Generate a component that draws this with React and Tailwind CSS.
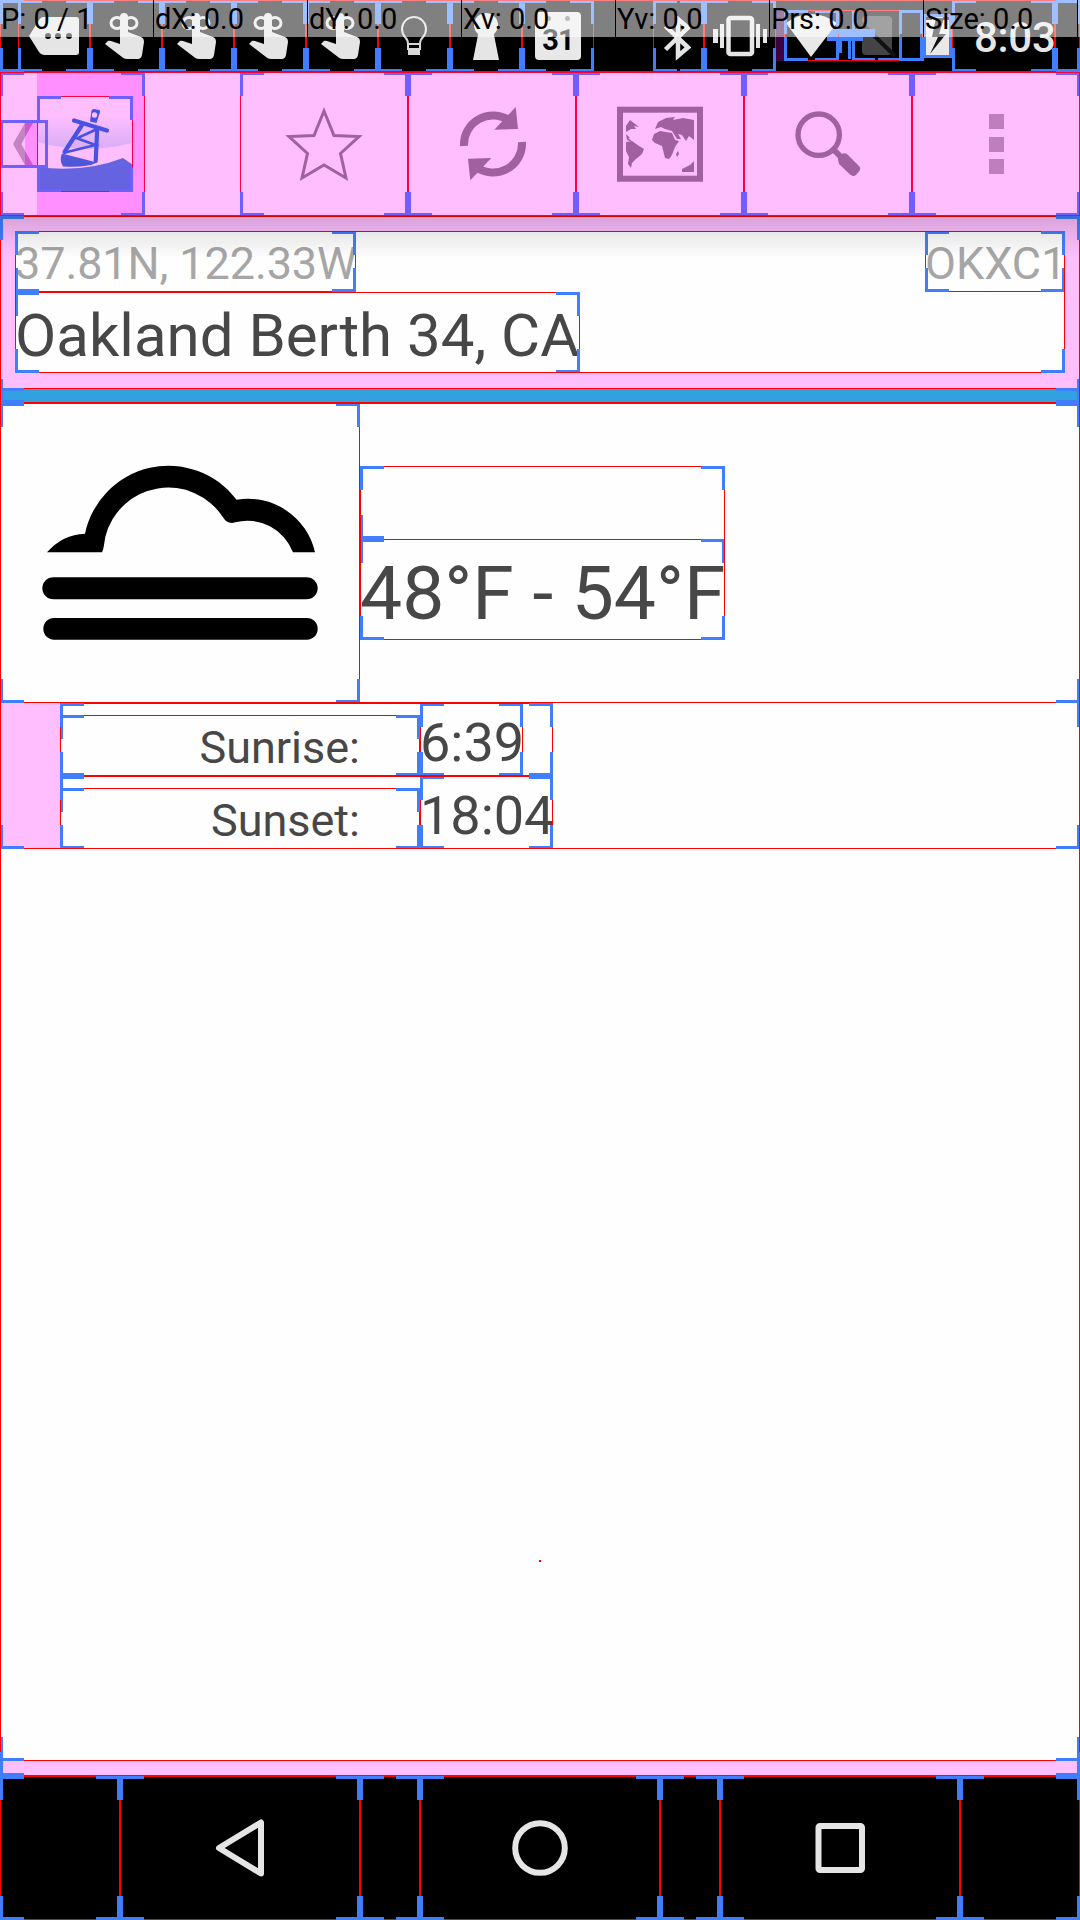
import React from "react";

/* Debug outline: one-pixel red frame with blue corner marks. */
function Outline({ frame = true, sides = "both" }) {
  return (
    <span className="pointer-events-none absolute inset-0">
      {frame && <span className="absolute inset-0 border border-[#ff0000]" />}
      <span className="absolute left-0 top-0 size-6 border-l-3 border-t-3 border-[#3f7fff]" />
      <span className="absolute bottom-0 left-0 size-6 border-b-3 border-l-3 border-[#3f7fff]" />
      {sides === "both" && (
        <>
          <span className="absolute right-0 top-0 size-6 border-r-3 border-t-3 border-[#3f7fff]" />
          <span className="absolute bottom-0 right-0 size-6 border-b-3 border-r-3 border-[#3f7fff]" />
        </>
      )}
    </span>
  );
}

function Box({ className = "", children, sides, frame }) {
  return (
    <div className={"relative shrink-0 " + className}>
      {children}
      <Outline sides={sides} frame={frame} />
    </div>
  );
}

function Hand() {
  return (
    <svg viewBox="0 0 72 72" className="size-[72px]" fill="#e5e5e5">
      <ellipse cx="27" cy="23" rx="6" ry="5.5" fill="none" stroke="#e5e5e5" strokeWidth="3" />
      <ellipse cx="41" cy="23" rx="6" ry="5.5" fill="none" stroke="#e5e5e5" strokeWidth="3" />
      <path d="M30 17q0-4 4-4t4 4V32l13 5q3 1 3 5l-2 13q-1 4-4 4H37q-3 0-5-2L15 44l2-2q1-2 4-1l9 3z" />
    </svg>
  );
}

function StatusBar() {
  const readings = ["P: 0 / 1", "dX: 0.0", "dY: 0.0", "Xv: 0.0", "Yv: 0.0", "Prs: 0.0", "Size: 0.0"];
  return (
    <div className="relative h-[72px] bg-black">
      <div className="flex h-[72px]">
        <div className="w-[18px]" />
        <Box className="w-[72px]">
          <svg viewBox="0 0 72 72" className="size-[72px]">
            <path d="M25 17H58q3 0 3 3V52q0 3-3 3H26q-3 0-5-3L11 36L21 20q2-3 4-3z" fill="#e5e5e5" />
            <circle cx="30" cy="36" r="3" /><circle cx="40" cy="36" r="3" /><circle cx="51" cy="36" r="3" />
          </svg>
        </Box>
        <Box className="w-[72px]"><Hand /></Box>
        <Box className="w-[72px]"><Hand /></Box>
        <Box className="w-[72px]"><Hand /></Box>
        <Box className="w-[72px]"><Hand /></Box>
        <Box className="w-[72px]">
          <svg viewBox="0 0 72 72" className="size-[72px]" fill="none" stroke="#d8d8d8" strokeWidth="2">
            <path d="M30 44q0-4-3-7a12 12 0 1 1 18 0q-3 3-3 7z" />
            <path d="M30 44v5h12v-5" /><path d="M31 50h10v4h-10z" fill="#d8d8d8" />
          </svg>
        </Box>
        <Box className="w-[72px]">
          <svg viewBox="0 0 72 72" className="size-[72px]" fill="#e5e5e5">
            <circle cx="36" cy="25" r="12" />
            <path d="M29 30h14l6 30H23z" />
          </svg>
        </Box>
        <Box className="w-[72px]">
          <div className="flex h-[72px] justify-center pt-[12px]">
            <div className="relative h-[48px] w-[46px] rounded-[4px] bg-[#e8e8e8] pt-[13px] text-center text-[29px] font-bold leading-[30px] tracking-[-1px] text-black">
              31
              <span className="absolute left-[11px] top-[4px] size-[5px] rounded-full bg-[#777]" />
              <span className="absolute right-[11px] top-[4px] size-[5px] rounded-full bg-[#777]" />
            </div>
          </div>
        </Box>
        <div className="w-[59px]" />
        <Box className="w-[51px]">
          <svg viewBox="0 0 51 72" className="h-[72px] w-[51px]" fill="none" stroke="#e5e5e5" strokeWidth="4.500">
            <path d="M12.500 26L35 47.500L25 56V19L35 27.500L12.500 49.500" />
          </svg>
        </Box>
        <Box className="w-[72px]">
          <svg viewBox="704 0 72 72" className="size-[72px]" fill="#e5e5e5">
            <rect x="728.500" y="18" width="23.500" height="36" rx="2" fill="none" stroke="#e5e5e5" strokeWidth="4.500" />
            <path d="M713 29h5v14h-5zM720 24h4v24h-4zM756 24h4v24h-4zM763 29h4v14h-4z" />
          </svg>
        </Box>
        <div className="w-[8px] pt-[10px]"><div className="h-[51px] bg-[#400040]" /></div>
        <div className="h-[61px] w-[139px] pt-[10px]">
          <Box className="flex h-[51px]">
            <Box className="w-[55px]">
              <svg viewBox="784 10 55 51" className="h-[51px] w-[55px]">
                <path d="M786 23Q811 5 837 23L811 57z" fill="#e8e8e8" />
              </svg>
            </Box>
            <svg viewBox="839 10 60 51" className="h-[51px] w-[60px] overflow-visible">
              <rect x="862" y="16" width="30" height="39" rx="4" fill="#444" />
              <path d="M858 20L895 56" stroke="#111" strokeWidth="4" />
              <path d="M827 29h48v8h-12v4h-36zM839 41h3v12h-3zM848 41h3v18h-3z" fill="#3f7fff" />
              <path d="M852 10v51h23v-3h-20V10zM878 58h21v3h-21z" fill="#3f7fff" />
            </svg>
            <Box className="w-[25px]"><div /></Box>
          </Box>
        </div>
        <div className="h-[58px] w-[29px] pt-[14px]">
          <Box className="h-[44px]">
            <svg viewBox="923 14 29 44" className="h-[44px] w-[29px]">
              <path d="M926 20h6v-4h11v4h6v35h-23z" fill="#e8e8e8" />
              <path d="M936 18L932 37h6l-8 17l16-20h-7l5-16z" fill="#111" />
            </svg>
          </Box>
        </div>
        <Box className="w-[103px] pl-[22px] pt-[14px] text-[42px] font-medium leading-[48px] tracking-[-0.3px] text-[#e5e5e5]">8:03</Box>
        <Box className="w-[25px]"><div /></Box>
      </div>
      <Outline />
      <div className="absolute left-0 top-0 flex h-[37px] w-full">
        {readings.map((r) => (
          <div key={r} className="h-[37px] w-[154px] shrink-0 border-r border-black">
            <div className="h-full whitespace-pre bg-white/50 pl-[1px] pt-[1px] text-[29px] leading-[36px] text-black">{r}</div>
          </div>
        ))}
        <div className="h-[37px] w-[2px] bg-white/50" />
      </div>
    </div>
  );
}

function ActionBar() {
  return (
    <div className="relative flex h-[144px] bg-white">
      <Box className="flex w-[145px]">
        <div className="w-[37px]" />
        <div className="w-[108px] bg-[#ffbfff] pt-[24px]">
          <Box className="size-[96px] bg-white">
            <svg viewBox="37 96 96 96" className="size-[96px]">
              <defs>
                <linearGradient id="sky" x1="0" y1="0" x2="0" y2="1">
                  <stop offset="0.350" stopColor="#ffffff" />
                  <stop offset="1" stopColor="#cbe6f4" />
                </linearGradient>
              </defs>
              <path d="M37 96H133V143Q85 155 37 142z" fill="url(#sky)" />
              <path d="M37 167Q85 173 123 158L133 165V192H37z" fill="#3184d4" />
              <path d="M62 153.500L97 162.500Q86 168 63 166.500Q59 160 62 153.500z" fill="#1675cc" />
              <g fill="none" stroke="#0d6bd8" strokeWidth="4.200" strokeLinecap="round">
                <path d="M74 120.500L107 130.500" />
                <path d="M82 125L64.500 152M97.200 129L95.700 161" />
                <path d="M95 130L77 138.300L95.500 145L65 152.500" strokeWidth="2.500" />
              </g>
              <path d="M91.500 110.500Q92 109 94 109L99 110Q100.500 110.500 100 112L96.500 123L90 121.500z" fill="#0d6bd8" />
              <circle cx="94.500" cy="115" r="2.700" fill="white" />
            </svg>
          </Box>
        </div>
        <div className="absolute left-0 top-[48px] h-[48px] w-[48px]">
          <svg viewBox="0 120 48 48" className="size-[48px]">
            <path d="M25 120H37V168H25z" fill="#ffbfff" />
            <path d="M25 123V137L21.500 144L25 151V165L13 144z" fill="#b0b0b0" />
            <path d="M25 123H33L25 137zM25 151L33 165H25z" fill="#c070c0" />
          </svg>
          <span className="absolute inset-0 border-3 border-[#3f7fff]" />
        </div>
      </Box>
      <div className="w-[95px]" />
      <Box className="w-[168px]">
        <svg viewBox="240 72 168 144" className="h-[144px] w-[168px]">
          <path d="M324 111L334 135.500L359 136.500L340.500 153.500L346 178L324 165L302 178L307.500 153.500L289 136.500L314 135.500z" fill="none" stroke="#818181" strokeWidth="3" />
        </svg>
      </Box>
      <Box className="w-[168px]">
        <svg viewBox="408 72 168 144" className="h-[144px] w-[168px]">
          <g fill="none" stroke="#818181" strokeWidth="8">
            <path d="M464 146A29 29 0 0 1 510 121" />
            <path d="M522 142A29 29 0 0 1 476 167" />
          </g>
          <path d="M515.700 107L518 129L494.300 129.700zM470.300 180.300L468 158.700L491.300 158z" fill="#818181" />
        </svg>
      </Box>
      <Box className="w-[168px]">
        <svg viewBox="576 72 168 144" className="h-[144px] w-[168px]" fill="#818181">
          <rect x="620" y="109.700" width="80" height="69" fill="none" stroke="#818181" strokeWidth="6" />
          <path d="M626 126L630 120L639 127L634 126L636 129L631 129L626 132zM626 134L630 138L628 138L633 142L627 140z" />
          <path d="M626 142L632 141L639 146L644 149L642 154L636 159L632 163L631 168L628 164L629 157L626 151z" />
          <path d="M654 134L660 131L672 133L675 140L679 141L675 147L672 155L669 159L665 158L662 146L655 143L652 140z" />
          <path d="M655 129L658 122L666 118L675 117L673 120L683 118L694 120V140L689 136L686 141L682 135L678 134L681 139L677 139L672 131L665 129L661 127z" />
          <path d="M678 151L679 154L677 157L676 154zM682 169L690 165L694 161V172H682z" />
        </svg>
      </Box>
      <Box className="w-[168px]">
        <svg viewBox="744 72 168 144" className="h-[144px] w-[168px]" fill="none" stroke="#818181">
          <circle cx="818.700" cy="134.700" r="20.700" strokeWidth="5.300" />
          <path d="M833 149L842 158" strokeWidth="6" />
          <path d="M838 159.500Q837 157 839 155.500L843 153.500Q846 152.500 848 155L859 166Q861 168 860 170L856 175Q853 177 850 174.500L839 164z" fill="#818181" stroke="none" />
        </svg>
      </Box>
      <Box className="flex w-[168px] flex-col gap-[7.500px] pl-[77px] pt-[42px]">
        <div className="size-[15px] bg-[#aaaaaa]" />
        <div className="size-[15px] bg-[#aaaaaa]" />
        <div className="size-[15px] bg-[#aaaaaa]" />
      </Box>
      <div className="absolute inset-0 bg-[#ff00ff]/25" />
      <span className="absolute inset-0 border border-[#ff0033]" />
    </div>
  );
}

function StationHeader() {
  return (
    <div className="relative bg-[#ffbfff] p-[15px]">
      <div className="pointer-events-none absolute left-0 top-0 z-10 h-[42px] w-full bg-gradient-to-b from-black/15 to-transparent" />
      <Box className="h-[142px] bg-[#fefefe]">
        <div className="flex justify-between">
          <Box className="h-[61px] w-[341px] whitespace-nowrap pt-[3px] text-[45px] leading-[60px] tracking-[-0.1px] text-[#a6a6a6]">37.81N, 122.33W</Box>
          <Box className="h-[61px] w-[140px] whitespace-nowrap pt-[3px] text-[45px] leading-[60px] text-[#a6a6a6]">OKXC1</Box>
        </div>
        <Box className="h-[81px] w-[565px] whitespace-nowrap pt-[4px] text-[60px] leading-[80px]">Oakland Berth 34, CA</Box>
      </Box>
    </div>
  );
}

function FogIcon() {
  return (
    <svg viewBox="0 9 1080 900" className="h-[300px] w-[360px]">
      <path d="M141 457Q188 403 255 401A256 256 0 0 1 710 299A206 206 0 0 1 945 457H879A146 146 0 0 0 706 367Q682 374 669 352A195 195 0 0 0 316 410L312 435Q310 450 306 457z" />
      <rect x="127" y="532" width="826" height="66" rx="33" />
      <rect x="130" y="654" width="823" height="65" rx="32" />
    </svg>
  );
}

function SunRow({ label, time, timeWidth }) {
  return (
    <Box className="flex h-[73px] w-[493px] items-end">
      <Box className="h-[61px] w-[360px] pr-[60px] pt-[3px] text-right text-[45px] leading-[60px]">{label}</Box>
      <Box className={"h-[73px] whitespace-nowrap pt-[4px] text-[54px] leading-[72px] " + timeWidth}>{time}</Box>
    </Box>
  );
}

function NavBar() {
  return (
    <div className="flex h-[144px] bg-black">
      <Box className="w-[120px]"><div /></Box>
      <Box className="w-[240px]">
        <svg viewBox="120 1776 240 144" className="h-[144px] w-[240px]">
          <path d="M219 1848L261 1822.500V1873.500z" fill="none" stroke="#e5e5e5" strokeWidth="6" strokeLinejoin="round" />
        </svg>
      </Box>
      <Box className="w-[60px]"><div /></Box>
      <Box className="w-[240px]">
        <svg viewBox="420 1776 240 144" className="h-[144px] w-[240px]">
          <circle cx="540" cy="1848" r="24.800" fill="none" stroke="#e5e5e5" strokeWidth="6" />
        </svg>
      </Box>
      <Box className="w-[60px]"><div /></Box>
      <Box className="w-[240px]">
        <svg viewBox="720 1776 240 144" className="h-[144px] w-[240px]">
          <rect x="818.500" y="1826" width="43.500" height="44" rx="1.500" fill="none" stroke="#e5e5e5" strokeWidth="6" />
        </svg>
      </Box>
      <Box className="w-[120px]"><div /></Box>
    </div>
  );
}

export default function App() {
  return (
    <div className="flex h-[1920px] w-[1080px] flex-col overflow-hidden bg-[#fefefe] font-['Roboto',sans-serif] text-[#474747]">
      <StatusBar />
      <ActionBar />
      <Box className="flex h-[1560px] flex-col">
        <Box className="flex h-[1545px] flex-col">
          <StationHeader />
          <Box className="h-[15px] bg-[#33a0e0]"><div /></Box>
          <Box className="flex h-[300px] items-center">
            <Box className="w-[360px]"><FogIcon /></Box>
            <Box className="h-[174px] w-[365px]">
              <Box className="h-[73px]" sides="left" frame={false}><div /></Box>
              <Box className="h-[101px] whitespace-nowrap pt-[4px] text-[75px] leading-[100px]">48°F - 54°F</Box>
            </Box>
          </Box>
          <div className="relative flex h-[146px]">
            <div className="w-[60px] bg-[#ffbfff]" />
            <div>
              <SunRow label="Sunrise:" time="6:39" timeWidth="w-[103px]" />
              <SunRow label="Sunset:" time="18:04" timeWidth="w-[133px]" />
            </div>
            <span className="absolute inset-0 border-x border-b border-[#ff0000]" />
            <span className="absolute bottom-0 left-0 size-6 border-b-3 border-l-3 border-[#3f7fff]" />
            <span className="absolute bottom-0 right-0 size-6 border-b-3 border-r-3 border-[#3f7fff]" />
            <span className="absolute right-0 top-0 h-6 w-[3px] bg-[#3f7fff]" />
          </div>
          <div className="flex flex-1 justify-center pt-[711px]">
            <div className="size-[2px] bg-[#ff0000]" />
          </div>
        </Box>
        <div className="h-[15px] bg-[#ffbfff]" />
      </Box>
      <NavBar />
    </div>
  );
}
